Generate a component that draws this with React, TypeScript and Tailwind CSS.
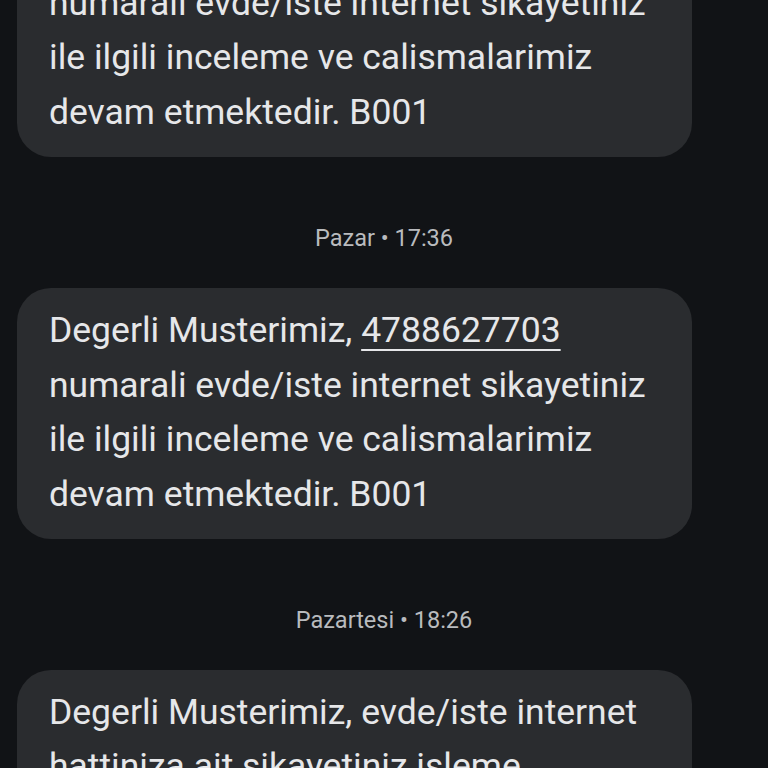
const messages = [
  {
    stamp: null as string | null,
    parts: ['Degerli Musterimiz, ', '4788627703', ' numarali evde/iste internet sikayetiniz ile ilgili inceleme ve calismalarimiz devam etmektedir. B001'],
  },
  {
    stamp: 'Pazar • 17:36',
    parts: ['Degerli Musterimiz, ', '4788627703', ' numarali evde/iste internet sikayetiniz ile ilgili inceleme ve calismalarimiz devam etmektedir. B001'],
  },
  {
    stamp: 'Pazartesi • 18:26',
    parts: ['Degerli Musterimiz, evde/iste internet hattiniza ait sikayetiniz isleme alinmistir. B001', '', ''],
  },
];

export default function App() {
  return (
    <div
      className="h-[768px] w-[768px] overflow-hidden bg-[#111316] text-[#e6e7e9]"
      style={{ fontFamily: 'Roboto, "Noto Sans", sans-serif' }}
    >
      <div className="-mt-[94px] flex flex-col">
        {messages.map((m, i) => (
          <div key={i} className="flex flex-col">
            {m.stamp && (
              <p className="mt-[67px] mb-[36px] text-center text-[23.5px] leading-[28px] text-[#b9bbbe]">{m.stamp}</p>
            )}
            <div className="ml-[17px] w-[675px] rounded-[34px] bg-[#2a2c2f] pt-[15px] pb-[17px] pl-[32px] pr-[20px] text-[35.5px] leading-[54.7px]">
              {m.parts[0]}
              {m.parts[1] && <span className="underline decoration-[2px] underline-offset-[7px]">{m.parts[1]}</span>}
              {m.parts[2]}
            </div>
          </div>
        ))}
      </div>
    </div>
  );
}
